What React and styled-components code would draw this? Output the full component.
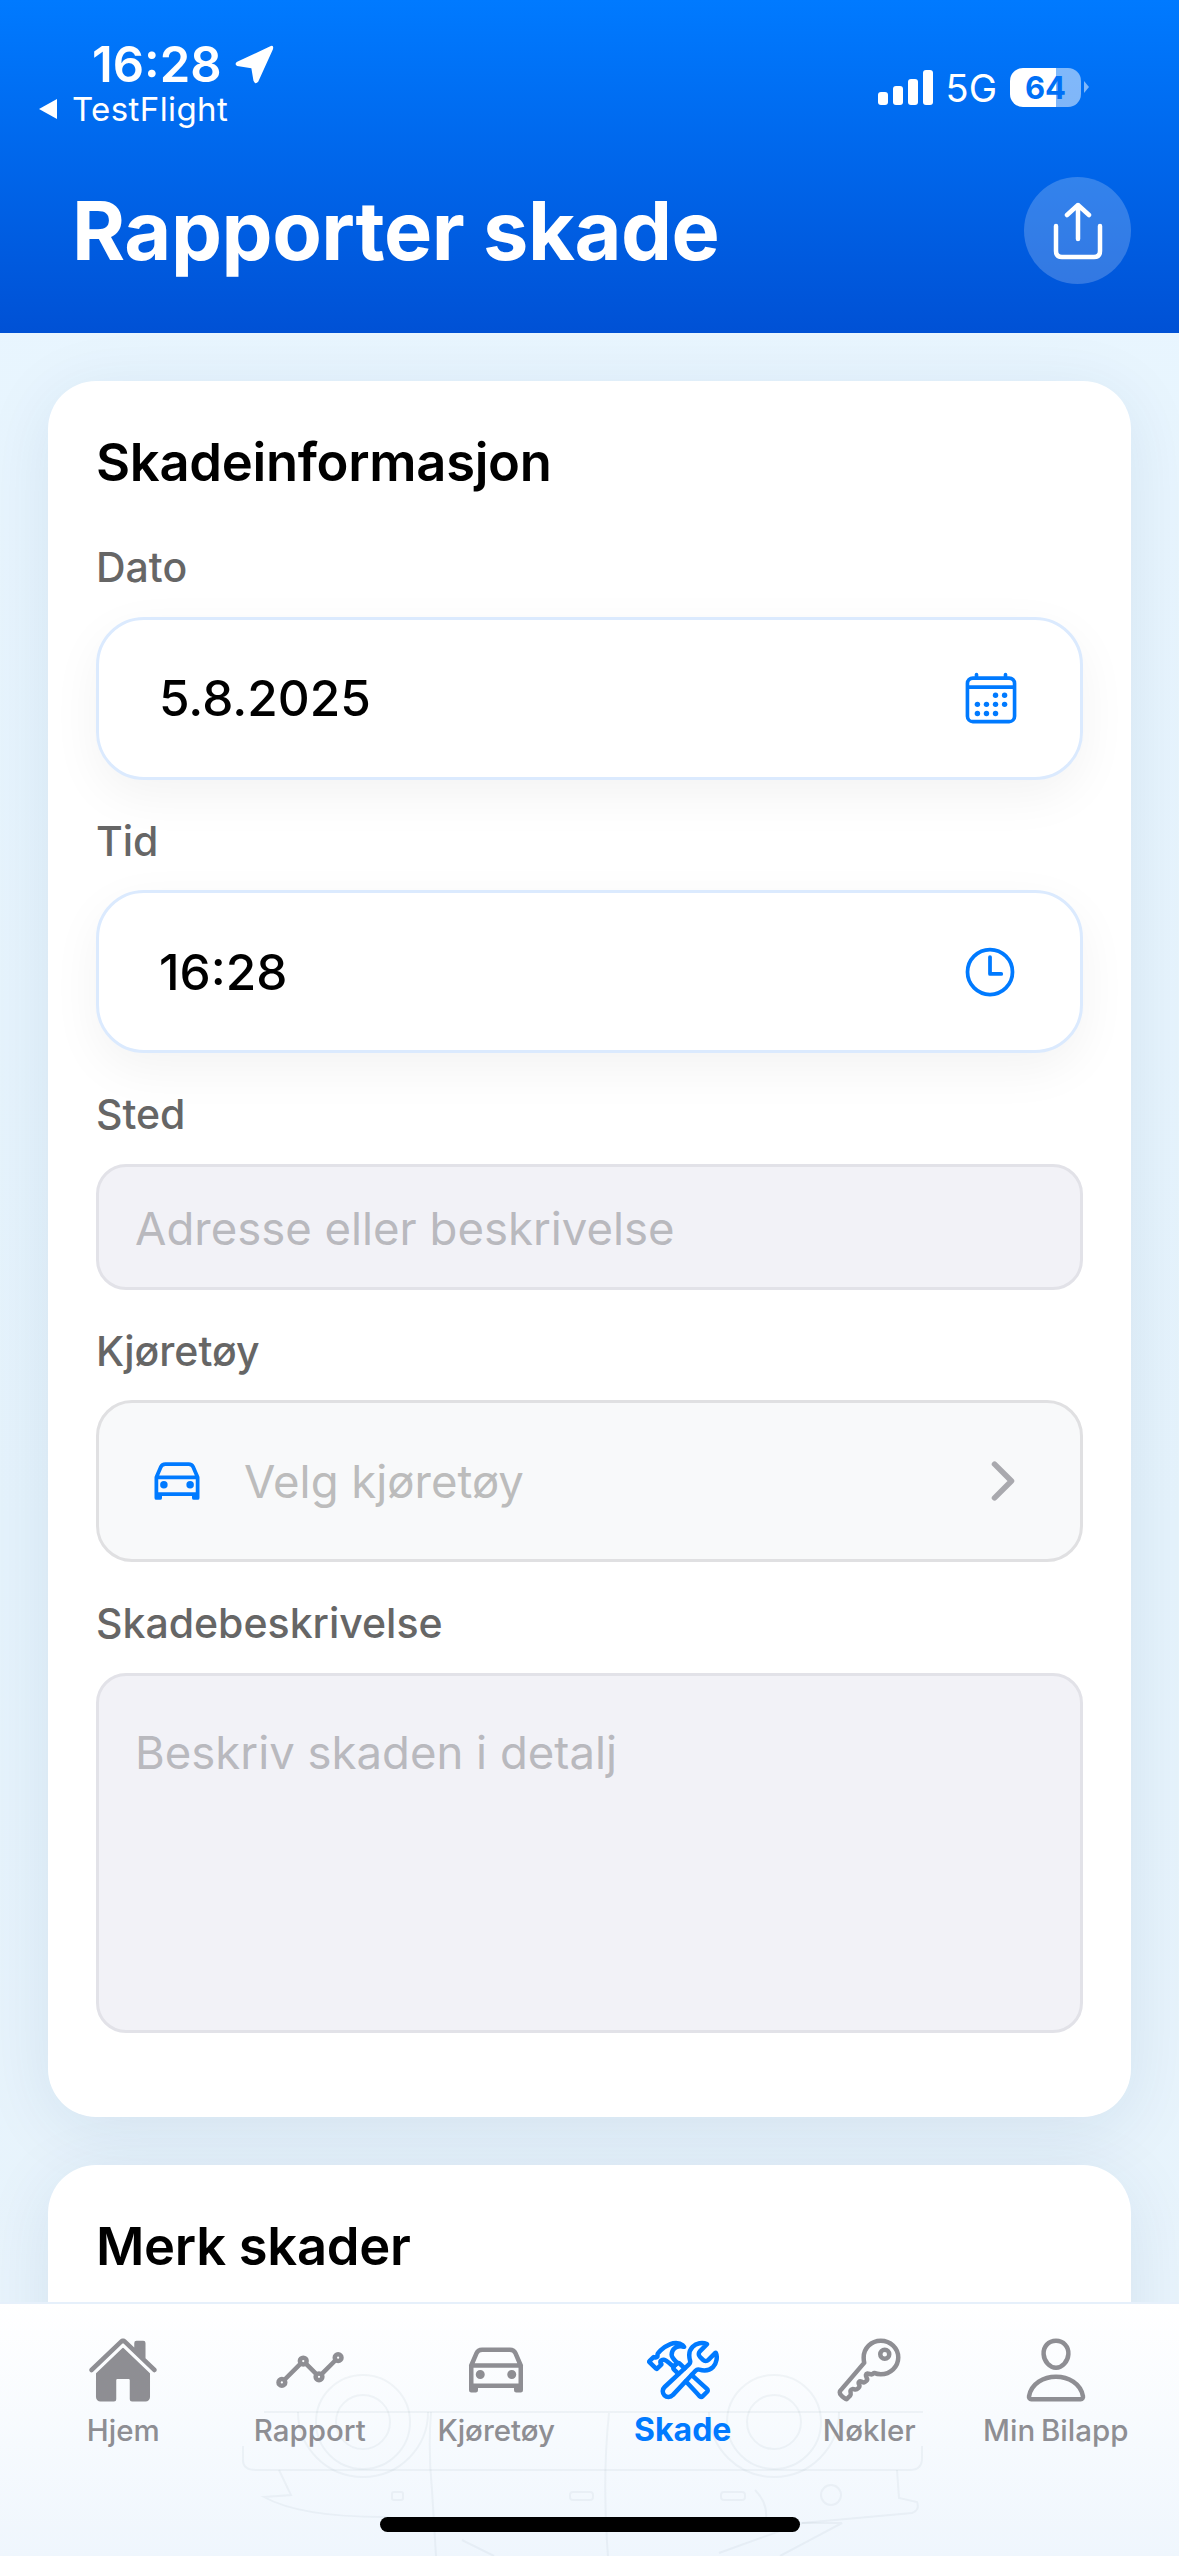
import React from 'react';
import styled, { createGlobalStyle } from 'styled-components';
import {
  IoHome,
  IoAnalyticsOutline,
  IoCarOutline,
  IoConstructOutline,
  IoKeyOutline,
  IoPersonOutline,
  IoCalendarOutline,
  IoTimeOutline,
  IoChevronForward,
} from 'react-icons/io5';

const GlobalStyle = createGlobalStyle`
  html, body {
    margin: 0;
    padding: 0;
    background: #eaf6ff;
  }
  * {
    box-sizing: border-box;
  }
`;

const blue = '#007aff';

const Page = styled.div`
  width: 1179px;
  height: 2556px;
  display: flex;
  flex-direction: column;
  overflow: hidden;
  font-family: Inter, 'Liberation Sans', sans-serif;
  background: linear-gradient(180deg, #e9f6ff 0%, #e5f3fc 60%, #e9f4fc 100%);
`;

const Header = styled.header`
  height: 333px;
  flex: none;
  padding: 39px 48px 0 38px;
  color: #fff;
  background: linear-gradient(180deg, #007aff 0%, #0051d5 100%);
`;

const StatusBar = styled.div`
  display: flex;
  justify-content: space-between;
  height: 89px;
`;

const StatusLeft = styled.div`
  display: flex;
  flex-direction: column;
`;

const Clock = styled.div`
  display: flex;
  align-items: center;
  gap: 12px;
  padding-left: 54px;
  font-size: 49px;
  line-height: 52px;
  font-weight: 600;
`;

const BackLink = styled.div`
  display: flex;
  align-items: center;
  gap: 14px;
  font-size: 33px;
  line-height: 36px;
  letter-spacing: 0.4px;
`;

const StatusRight = styled.div`
  display: flex;
  align-items: center;
  gap: 13px;
  padding: 8px 50px 0 0;
`;

const Signal = styled.div`
  display: flex;
  align-items: flex-end;
  gap: 5px;
  height: 35px;
`;

const SignalBar = styled.span`
  width: 10px;
  height: ${(p) => p.$h}px;
  border-radius: 3px;
  background: #fff;
`;

const Network = styled.span`
  font-size: 38px;
  line-height: 40px;
`;

const Battery = styled.div`
  position: relative;
  width: 71px;
  height: 39px;
  border-radius: 13px;
  display: flex;
  align-items: center;
  justify-content: center;
  color: #0070f6;
  font-size: 31px;
  font-weight: 700;
  background: linear-gradient(90deg, #fff 65%, rgba(255, 255, 255, 0.5) 65%);
  &::after {
    content: '';
    position: absolute;
    right: -8px;
    top: 13px;
    border-left: 5px solid rgba(255, 255, 255, 0.5);
    border-top: 6px solid transparent;
    border-bottom: 6px solid transparent;
  }
`;

const TitleRow = styled.div`
  display: flex;
  align-items: center;
  justify-content: space-between;
  padding-left: 34px;
  margin-top: 49px;
`;

const Title = styled.h1`
  margin: 0;
  font-size: 81px;
  line-height: 98px;
  font-weight: 700;
  letter-spacing: -0.45px;
`;

const RoundButton = styled.div`
  width: 107px;
  height: 107px;
  border-radius: 50%;
  display: flex;
  align-items: center;
  justify-content: center;
  background: rgba(255, 255, 255, 0.2);
`;

const Content = styled.main`
  flex: 1;
  min-height: 0;
  overflow: hidden;
  padding: 48px 48px 0;
  display: flex;
  flex-direction: column;
  gap: 48px;
`;

const Card = styled.section`
  flex: none;
  background: #fff;
  border-radius: 48px;
  padding: 48px 48px 84px;
  box-shadow: 0 12px 70px rgba(0, 60, 110, 0.09);
`;

const CardTitle = styled.h2`
  margin: 0 0 48px;
  font-size: 52.500px;
  line-height: 66px;
  font-weight: 600;
  color: #000;
  letter-spacing: -0.3px;
`;

const Label = styled.label`
  display: block;
  margin: 37px 0 25.500px;
  font-size: 41px;
  line-height: 48px;
  font-weight: 500;
  color: #666;
  ${CardTitle} + & {
    margin-top: 0;
  }
`;

const PickerField = styled.div`
  height: 163px;
  padding: 0 60px;
  display: flex;
  align-items: center;
  justify-content: space-between;
  font-size: 49.500px;
  font-weight: 500;
  color: #000;
  background: #fff;
  border: 3px solid #dbeafe;
  border-radius: 48px;
  box-shadow: 0 16px 50px rgba(0, 0, 0, 0.05);
  svg {
    color: ${blue};
    flex: none;
  }
`;

const TextInput = styled.div`
  height: ${(p) => (p.$multiline ? '360px' : '126px')};
  padding: ${(p) => (p.$multiline ? '53px 36px' : '38px 36px')};
  font-size: 45.500px;
  line-height: 48px;
  color: #b9b9be;
  background: #f2f2f7;
  border: 3px solid #e2e2e8;
  border-radius: 30px;
`;

const SelectField = styled.div`
  height: 162px;
  padding: 0 47px 0 48px;
  display: flex;
  align-items: center;
  font-size: 45.500px;
  color: #bcbcbc;
  background: #f8f9fa;
  border: 3px solid #e0e0e2;
  border-radius: 36px;
`;

const SelectText = styled.span`
  flex: 1;
  margin-left: 37px;
`;

const TabBar = styled.nav`
  position: relative;
  flex: none;
  height: 254px;
  padding: 30px 30px 0;
  display: grid;
  grid-template-columns: repeat(6, 1fr);
  align-items: start;
  overflow: hidden;
  border-top: 2px solid #e6f0fb;
  background: linear-gradient(180deg, #ffffff 0%, #eff6fd 100%);
`;

const Watermark = styled.svg`
  position: absolute;
  left: 180px;
  top: 76px;
  width: 820px;
  height: 176px;
  overflow: visible;
  fill: none;
  stroke: rgba(130, 150, 170, 0.09);
  stroke-width: 2;
`;

const Tab = styled.div`
  position: relative;
  display: flex;
  flex-direction: column;
  align-items: center;
  gap: 7px;
  color: ${(p) => (p.$active ? blue : '#8e8e93')};
  font-size: ${(p) => (p.$active ? 32 : 29.5)}px;
  line-height: 34px;
  font-weight: ${(p) => (p.$active ? 700 : 500)};
  word-spacing: -2px;
  white-space: nowrap;
`;

const TabIcon = styled.div`
  height: 72px;
  font-size: 72px;
  line-height: 0;
`;

const HomeIndicator = styled.div`
  position: absolute;
  left: 380px;
  bottom: 24px;
  width: 420px;
  height: 15px;
  border-radius: 8px;
  background: #000;
`;

const tabs = [
  { label: 'Hjem', Icon: IoHome },
  { label: 'Rapport', Icon: IoAnalyticsOutline },
  { label: 'Kjøretøy', Icon: IoCarOutline },
  { label: 'Skade', Icon: IoConstructOutline, active: true },
  { label: 'Nøkler', Icon: IoKeyOutline },
  { label: 'Min Bilapp', Icon: IoPersonOutline },
];

const LocationArrow = () => (
  <svg width="40" height="40" viewBox="0 0 38 38" fill="#fff">
    <path d="M35 1 Q38 0 37 4 L23 35 Q20 38 18.500 34 L16.500 22 L3 20 Q0 18 3 16 Z" />
  </svg>
);

const BackArrow = () => (
  <svg width="20" height="22" viewBox="0 0 20 22" fill="#fff">
    <path d="M19 1 V21 L1 11 Z" />
  </svg>
);

const ShareIcon = () => (
  <svg
    width="50"
    height="58"
    viewBox="0 0 50 58"
    fill="none"
    stroke="#fff"
    strokeWidth="4.500"
    strokeLinecap="round"
    strokeLinejoin="round"
  >
    <path d="M25 37 V3 M14 13 L25 3 L36 13" />
    <path d="M3 24 V49 Q3 55 9 55 H41 Q47 55 47 49 V24" />
  </svg>
);

// faint car front behind the tab labels
const CarWatermark = () => (
  <Watermark viewBox="0 0 820 176">
    <circle cx="183" cy="42" r="27" />
    <circle cx="183" cy="42" r="47" />
    <path d="M118 32 A65 65 0 0 0 248 32" />
    <circle cx="594" cy="42" r="27" />
    <circle cx="594" cy="42" r="47" />
    <path d="M529 32 A65 65 0 0 0 659 32" />
    <path d="M84 32 H743 M63 66 V80 Q63 90 76 90 H730 Q742 90 742 78 V66" />
    <path d="M99 90 L111 115 L84 117 Q120 137 204 137 L290 148" />
    <path d="M717 90 L719 118 L737 122 Q740 130 732 133 L622 143 L539 173" />
    <path d="M622 143 H662 L600 176" />
    <path d="M282 160 L314 176" />
    <path d="M251 32 Q248 70 252 110 L256 176" />
    <path d="M429 33 Q422 100 428 176" />
    <path d="M575 110 Q590 125 585 145" />
    <rect x="212" y="112" width="11" height="8" rx="2" />
    <rect x="390" y="112" width="23" height="8" rx="3" />
    <rect x="541" y="112" width="24" height="8" rx="3" />
    <circle cx="651" cy="115" r="10" />
  </Watermark>
);

export default function App() {
  return (
    <>
      <GlobalStyle />
      <Page>
        <Header>
          <StatusBar>
            <StatusLeft>
              <Clock>
                16:28
                <LocationArrow />
              </Clock>
              <BackLink>
                <BackArrow />
                TestFlight
              </BackLink>
            </StatusLeft>
            <StatusRight>
              <Signal>
                {[13, 19, 26, 35].map((h) => (
                  <SignalBar key={h} $h={h} />
                ))}
              </Signal>
              <Network>5G</Network>
              <Battery>64</Battery>
            </StatusRight>
          </StatusBar>
          <TitleRow>
            <Title>Rapporter skade</Title>
            <RoundButton>
              <ShareIcon />
            </RoundButton>
          </TitleRow>
        </Header>
        <Content>
          <Card>
            <CardTitle>Skadeinformasjon</CardTitle>
            <Label>Dato</Label>
            <PickerField>
              5.8.2025
              <IoCalendarOutline size={58} />
            </PickerField>
            <Label>Tid</Label>
            <PickerField>
              16:28
              <IoTimeOutline size={60} />
            </PickerField>
            <Label>Sted</Label>
            <TextInput>Adresse eller beskrivelse</TextInput>
            <Label>Kjøretøy</Label>
            <SelectField>
              <IoCarOutline size={60} color={blue} />
              <SelectText>Velg kjøretøy</SelectText>
              <IoChevronForward size={60} color="#a9a9ae" />
            </SelectField>
            <Label>Skadebeskrivelse</Label>
            <TextInput $multiline>Beskriv skaden i detalj</TextInput>
          </Card>
          <Card>
            <CardTitle>Merk skader</CardTitle>
          </Card>
        </Content>
        <TabBar>
          <CarWatermark />
          {tabs.map(({ label, Icon, active }) => (
            <Tab key={label} $active={active}>
              <TabIcon>
                <Icon />
              </TabIcon>
              {label}
            </Tab>
          ))}
          <HomeIndicator />
        </TabBar>
      </Page>
    </>
  );
}
